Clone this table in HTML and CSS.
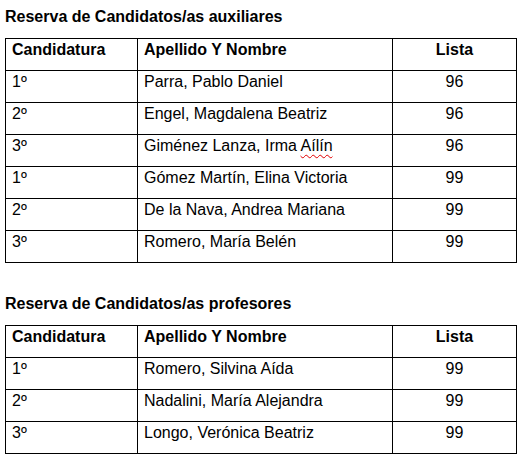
FILE: index.html
```html
<!DOCTYPE html>
<html lang="es">
<head>
<meta charset="utf-8">
<title>Reserva de Candidatos</title>
<link rel="stylesheet" href="styles.css">
</head>
<body>
<div class="page">
  <h2 class="title">Reserva de Candidatos/as auxiliares</h2>
  <table class="grid">
    <colgroup><col class="c1"><col class="c2"><col class="c3"></colgroup>
    <thead>
      <tr><th>Candidatura</th><th>Apellido Y Nombre</th><th class="num">Lista</th></tr>
    </thead>
    <tbody>
      <tr><td>1º</td><td>Parra, Pablo Daniel</td><td class="num">96</td></tr>
      <tr><td>2º</td><td>Engel, Magdalena Beatriz</td><td class="num">96</td></tr>
      <tr><td>3º</td><td>Giménez Lanza, Irma <span class="spell">Aílín</span></td><td class="num">96</td></tr>
      <tr><td>1º</td><td>Gómez Martín, Elina Victoria</td><td class="num">99</td></tr>
      <tr><td>2º</td><td>De la Nava, Andrea Mariana</td><td class="num">99</td></tr>
      <tr><td>3º</td><td>Romero, María Belén</td><td class="num">99</td></tr>
    </tbody>
  </table>

  <h2 class="title second">Reserva de Candidatos/as profesores</h2>
  <table class="grid">
    <colgroup><col class="c1"><col class="c2"><col class="c3"></colgroup>
    <thead>
      <tr><th>Candidatura</th><th>Apellido Y Nombre</th><th class="num">Lista</th></tr>
    </thead>
    <tbody>
      <tr><td>1º</td><td>Romero, Silvina Aída</td><td class="num">99</td></tr>
      <tr><td>2º</td><td>Nadalini, María Alejandra</td><td class="num">99</td></tr>
      <tr><td>3º</td><td>Longo, Verónica Beatriz</td><td class="num">99</td></tr>
    </tbody>
  </table>
</div>
</body>
</html>
```
FILE: styles.css
```css
html, body {
  margin: 0;
  padding: 0;
  background: #ffffff;
}
body {
  font-family: "Liberation Sans", Arial, sans-serif;
  font-size: 16px;
  color: #000000;
}
.page {
  padding: 8px 6px 0 5px;
}
.title {
  margin: 0;
  font-size: 16px;
  font-weight: bold;
  line-height: 18px;
  height: 18px;
}
.title.second {
  margin-top: 32px;
}
.grid {
  margin-top: 12px;
  border-collapse: collapse;
  table-layout: fixed;
  width: 511px;
}
.c1 { width: 132px; }
.c2 { width: 255px; }
.c3 { width: 124px; }
.grid tr {
  height: 32px;
}
.grid th,
.grid td {
  border: 1px solid #000000;
  padding: 2px 5px 0 6px;
  line-height: 18px;
  vertical-align: top;
  text-align: left;
  white-space: nowrap;
}
.grid th {
  font-weight: bold;
}
.grid .num {
  text-align: center;
  padding-left: 5px;
}
.spell {
  text-decoration: underline wavy #e00000;
  text-decoration-thickness: 1px;
  text-underline-offset: 3px;
}
```
